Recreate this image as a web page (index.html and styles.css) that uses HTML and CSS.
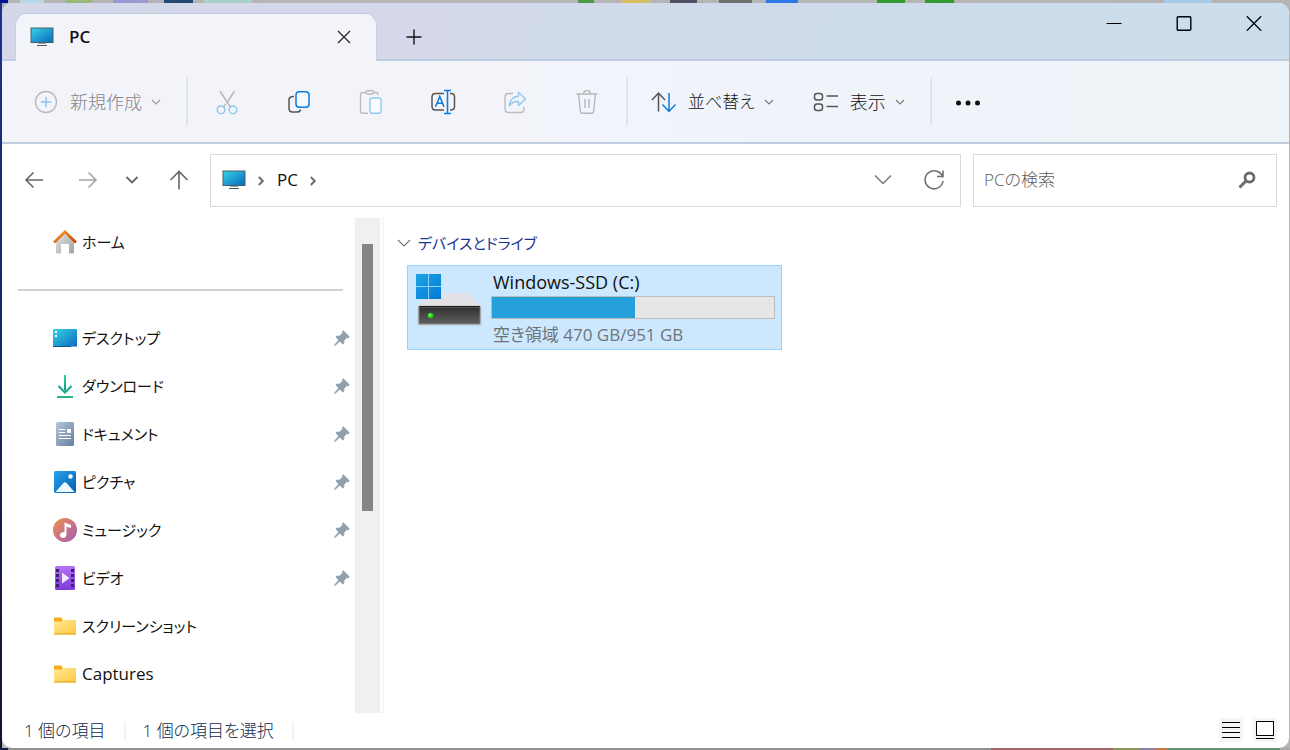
FILE: index.html
```html
<!DOCTYPE html>
<html lang="ja">
<head>
<meta charset="utf-8">
<title>PC</title>
<link rel="stylesheet" href="styles.css">
</head>
<body>
<svg class="defs" aria-hidden="true">
  <defs>
    <linearGradient id="g-screen" x1="0" y1="0" x2="1" y2="1"><stop offset="0" stop-color="#36d6e6"/><stop offset="1" stop-color="#0a66be"/></linearGradient>
    <linearGradient id="g-roof" x1="0" y1="0" x2="1" y2="1"><stop offset="0" stop-color="#f7a01a"/><stop offset="1" stop-color="#cc3a0c"/></linearGradient>
    <linearGradient id="g-wall" x1="0" y1="0" x2="1" y2="1"><stop offset="0" stop-color="#e6e6e6"/><stop offset="1" stop-color="#a2a2a4"/></linearGradient>
    <linearGradient id="g-down" x1="0" y1="0" x2="0" y2="1"><stop offset="0" stop-color="#37d295"/><stop offset="1" stop-color="#0f9a8a"/></linearGradient>
    <linearGradient id="g-doc" x1="0" y1="0" x2="1" y2="1"><stop offset="0" stop-color="#b4c6da"/><stop offset="1" stop-color="#667f9e"/></linearGradient>
    <linearGradient id="g-pic" x1="0" y1="0" x2="1" y2="1"><stop offset="0" stop-color="#22a4ea"/><stop offset="1" stop-color="#0a5cb4"/></linearGradient>
    <linearGradient id="g-music" x1="0" y1="0" x2="1" y2="1"><stop offset="0" stop-color="#f29150"/><stop offset="1" stop-color="#a45ab4"/></linearGradient>
    <linearGradient id="g-video" x1="0" y1="0" x2="0" y2="1"><stop offset="0" stop-color="#b472f6"/><stop offset="1" stop-color="#7e3ad8"/></linearGradient>
    <linearGradient id="g-folder" x1="0" y1="0" x2="1" y2="1"><stop offset="0" stop-color="#ffe89c"/><stop offset="1" stop-color="#ffc838"/></linearGradient>
    <linearGradient id="g-drive" x1="0" y1="0" x2="0" y2="1"><stop offset="0" stop-color="#303030"/><stop offset="1" stop-color="#606060"/></linearGradient>
    <linearGradient id="g-win" x1="0" y1="0" x2="1" y2="1"><stop offset="0" stop-color="#1fa5e8"/><stop offset="1" stop-color="#0078d4"/></linearGradient>
    <symbol id="i-pc" viewBox="0 0 24 20">
      <path d="M8 17h8v-1.500h-2V15h-4v.5H8z" fill="#9aa4aa"/><path d="M7 18.500h10" stroke="#4c5a62"/>
      <rect x="1" y="1" width="22" height="14.500" fill="url(#g-screen)" stroke="#46606c"/>
    </symbol>
    <symbol id="i-pin" viewBox="0 0 16 16">
      <path d="M9.500.5 15.500 6.500 14.800 8h-2L10.300 10.500V13L9 14.500 5.800 11.500 1.500 15.600.3 15.800.5 14.500 4.400 10.100 1.500 7l1-1.300H5.500L8.300 3V1z" fill="#93a0a9"/>
    </symbol>
    <symbol id="i-folder" viewBox="0 0 24 24">
      <path d="M1 4.500q0-1 1-1h6l1.500 1.500V8H1z" fill="#f7ab14"/><path d="M1 7.500h8l1.500-1.500H23v14.500H1z" fill="url(#g-folder)"/><path d="M1 20h22" stroke="#e3a519"/>
    </symbol>
    <symbol id="i-chev" viewBox="0 0 12 12"><path d="m2 4 4 4 4-4" fill="none" stroke="#777" stroke-width="1.100"/></symbol>
    <symbol id="i-crumb" viewBox="0 0 8 10"><path d="m1.800 1 4 4-4 4" fill="none" stroke="#6e6e6e" stroke-width="2"/></symbol>
  </defs>
</svg>

<div class="window">
  <header class="titlebar">
    <div class="tab">
      <svg class="pc-icon"><use href="#i-pc"/></svg>
      <span class="tab-title">PC</span>
      <button class="tab-close" aria-label="タブを閉じる"><svg width="14" height="14"><path d="m1 1 12 12M13 1 1 13" stroke="#222" stroke-width="1.200"/></svg></button>
    </div>
    <button class="new-tab" aria-label="新しいタブ"><svg width="16" height="16"><path d="M8 .5v15M.5 8h15" stroke="#111" stroke-width="1.400"/></svg></button>
    <div class="caption">
      <button aria-label="最小化"><svg width="16" height="16"><path d="M.5 8.500h15" stroke="#000"/></svg></button>
      <button aria-label="最大化"><svg width="16" height="16"><rect x="1.200" y="1.700" width="13.600" height="13.600" rx="1" fill="none" stroke="#000" stroke-width="1.400"/></svg></button>
      <button aria-label="閉じる"><svg width="16" height="16"><path d="m.8 1.300 14.400 14.400M15.200 1.300.8 15.700" stroke="#000" stroke-width="1.300"/></svg></button>
    </div>
  </header>

  <div class="commands" role="toolbar">
    <button class="cmd disabled">
      <svg width="24" height="24" fill="none"><circle cx="12" cy="12" r="10.500" stroke="#b9babf" stroke-width="1.400"/><path d="M12 7v10M7 12h10" stroke="#8cc4ec" stroke-width="1.500"/></svg>
      <span>新規作成</span><svg class="chev faded"><use href="#i-chev"/></svg>
    </button>
    <div class="sep gap-before"></div>
    <div class="icon-group">
      <button aria-label="切り取り"><svg width="24" height="26" fill="none" stroke-width="1.400"><path d="m5 2 10.600 16.500M19.500 2l-6.800 10.500M10.800 14.500 8.400 18.500" stroke="#b5b6bb"/><circle cx="6" cy="20.800" r="3.800" stroke="#8ec5ef"/><circle cx="18" cy="20.800" r="3.800" stroke="#8ec5ef"/></svg></button>
      <button aria-label="コピー"><svg width="24" height="24" fill="none" stroke-width="1.500"><path d="M7 6.500H5.500Q2 7 2 10v8.500Q2 22 5.500 22H10q3 0 3.500-2.500" stroke="#555"/><rect x="9" y="1.800" width="13" height="15.400" rx="3.200" stroke="#0b7ddb" fill="#f5faff"/></svg></button>
      <button aria-label="貼り付け"><svg width="24" height="26" fill="none" stroke-width="1.400"><path d="M9 24.300H3.500q-2 0-2-2V5.500q0-2 2-2H7M14.500 3.500H17q2 0 2 2V6" stroke="#babbc0"/><rect x="7" y="1.800" width="7.500" height="3.200" rx="1.500" stroke="#babbc0"/><rect x="11" y="9" width="11" height="15.300" rx="2" stroke="#91c7ee" fill="#f8fbff"/></svg></button>
      <button aria-label="名前の変更"><svg width="26" height="26" fill="none" stroke-width="1.500"><path d="M14 4.500H5.500Q2 4.500 2 8v9.500Q2 21 5.500 21H14M20 4.500h1q3.500 0 3.500 3.500v9.500q0 3.500-3.500 3.500h-1" stroke="#555"/><path d="M14 1.500h7M17.500 1.500v23M14 24.500h7M5.500 17.800 9.800 7.500l4.200 10.300M7 14.300h5.600" stroke="#0b7ddb" stroke-width="1.600"/></svg></button>
      <button aria-label="共有"><svg width="24" height="24" fill="none" stroke-width="1.400" stroke-linejoin="round"><path d="M10 3.500H5.500q-3.500 0-3.500 3.500v12q0 3.500 3.500 3.500h12q3.500 0 3.500-3.500v-2" stroke="#babbc0"/><path d="M15.500 2.200 22.500 9l-7 6.500v-4Q9.500 11 6.500 16q.5-9 9-10z" stroke="#94c8ee" fill="#edf5fc"/></svg></button>
      <button aria-label="削除"><svg width="24" height="26" fill="none" stroke="#b5b7bb" stroke-width="1.400"><path d="M1.500 5h21M8.500 5q0-3.400 3.500-3.400T15.500 5M3.500 5l1.800 17q.3 2.300 2.500 2.300h8.400q2.200 0 2.500-2.300l1.800-17M10 10v9M14 10v9"/></svg></button>
    </div>
    <div class="sep"></div>
    <button class="cmd sort">
      <svg width="25" height="24" fill="none" stroke-width="1.500"><path d="M7.500 21.500V3.500M1 10l6.500-7 6.500 7" stroke="#555"/><path d="M18 3v18M11.500 14.500 18 21.500l6.500-7" stroke="#0b7ddb"/></svg>
      <span>並べ替え</span><svg class="chev"><use href="#i-chev"/></svg>
    </button>
    <button class="cmd view">
      <svg width="25" height="24" fill="none" stroke="#555" stroke-width="1.500"><rect x="1.500" y="3.500" width="8" height="6.500" rx="2.500"/><rect x="1.500" y="14" width="8" height="6.500" rx="2.500"/><path d="M13.500 6H25M13.500 16.500H25"/></svg>
      <span>表示</span><svg class="chev"><use href="#i-chev"/></svg>
    </button>
    <div class="sep gap-before"></div>
    <button class="more" aria-label="もっと見る"><svg width="26" height="8" fill="#111"><circle cx="3.500" cy="5" r="2.500"/><circle cx="13" cy="5" r="2.500"/><circle cx="22.500" cy="5" r="2.500"/></svg></button>
  </div>

  <nav class="nav">
    <button class="nav-step" aria-label="戻る"><svg width="20" height="20" fill="none" stroke="#666" stroke-width="1.600"><path d="M19 10H2M9.500 2.500 2 10l7.500 7.500"/></svg></button>
    <button class="nav-step" aria-label="進む"><svg width="20" height="20" fill="none" stroke="#a4a4a4" stroke-width="1.600"><path d="M1 10h17M10.500 2.500 18 10l-7.500 7.500"/></svg></button>
    <button class="nav-recent" aria-label="最近表示した場所"><svg width="14" height="10" fill="none" stroke="#666" stroke-width="1.800"><path d="m1.500 2 5.500 5.500L12.500 2"/></svg></button>
    <button class="nav-up" aria-label="上へ"><svg width="20" height="22" fill="none" stroke="#666" stroke-width="1.600"><path d="M10 20.500V2.500M1.500 11 10 2.500l8.500 8.500"/></svg></button>
    <div class="address">
      <svg class="pc-icon"><use href="#i-pc"/></svg>
      <svg class="crumb"><use href="#i-crumb"/></svg>
      <a class="crumb-link" href="#">PC</a>
      <svg class="crumb"><use href="#i-crumb"/></svg>
      <button class="address-btn push" aria-label="以前の場所"><svg width="18" height="12" fill="none" stroke="#777" stroke-width="1.500"><path d="m1 1.500 8 8 8-8"/></svg></button>
      <button class="address-btn" aria-label="最新の情報に更新"><svg width="22" height="22" fill="none" stroke="#707070" stroke-width="1.600"><path d="M19.800 8.500A9 9 0 1 0 20 12M20 1.500v6h-6"/></svg></button>
    </div>
    <label class="search">
      <input type="text" placeholder="PCの検索" aria-label="PCの検索">
      <svg width="18" height="18" fill="none" stroke="#6c6c6c"><circle cx="11.500" cy="6.500" r="4.500" stroke-width="2.800"/><path d="M8 10 1.500 16.500" stroke-width="3"/></svg>
    </label>
  </nav>

  <main class="main">
    <aside class="sidebar">
      <a class="place" href="#"><svg width="24" height="24"><path d="M3 10 12 2l9 8v12q0 1.500-1.500 1.500H16V14H8v9.500H4.500Q3 23.500 3 22z" fill="url(#g-wall)"/><path d="M1 12.500 12 1.800l11 10.700" fill="none" stroke="url(#g-roof)" stroke-width="2.600"/></svg><span>ホーム</span></a>
      <hr class="rule">
      <a class="place" href="#"><svg width="24" height="24"><rect y="3" width="24" height="18" rx="1" fill="url(#g-screen)"/><path d="M0 20.500h24" stroke="#11578c"/><path d="M2 5h2v2H2zM2 9h2v2H2z" fill="#fff"/><path d="M18.500 20.500h5" stroke="#fff" stroke-dasharray="1 1"/></svg><span>デスクトップ</span><svg class="pin"><use href="#i-pin"/></svg></a>
      <a class="place" href="#"><svg width="24" height="24" fill="none" stroke-width="2"><path d="M11 1h2v15.500h-2z" fill="url(#g-down)" stroke="none"/><path d="m5.500 12 6.500 6.500 6.500-6.500" stroke="#16a68b"/><path d="M4 23h16" stroke="#27b58f"/></svg><span>ダウンロード</span><svg class="pin"><use href="#i-pin"/></svg></a>
      <a class="place" href="#"><svg width="24" height="24"><rect x="3" width="18" height="24" rx="1.500" fill="url(#g-doc)"/><path d="M6 7.500h6M6 10.500h6M6 13.500h12M6 16.500h12" stroke="#fff"/><path d="M14 7h4v4h-4z" fill="#fff"/></svg><span>ドキュメント</span><svg class="pin"><use href="#i-pin"/></svg></a>
      <a class="place" href="#"><svg width="24" height="24"><rect x="1" y="1" width="22" height="22" rx="1.500" fill="url(#g-pic)"/><path d="M2.500 22 10.500 13q1.500-1.500 3 0l8 9z" fill="#eef8ff"/><circle cx="17.500" cy="6.500" r="2.200" fill="#fff"/></svg><span>ピクチャ</span><svg class="pin"><use href="#i-pin"/></svg></a>
      <a class="place" href="#"><svg width="24" height="24"><circle cx="12" cy="12" r="12" fill="url(#g-music)"/><path d="M11.500 4.500 18 7v3l-4.500-1.200V16q0 4-3.500 4-3-.3-3-3t4.500-3z" fill="#fff"/></svg><span>ミュージック</span><svg class="pin"><use href="#i-pin"/></svg></a>
      <a class="place" href="#"><svg width="24" height="24"><rect x="2" width="20" height="24" rx="1.500" fill="url(#g-video)"/><path d="M4.500 3v19M19.500 3v19" stroke="#3d2070" stroke-width="3" stroke-dasharray="3 2"/><path d="M9 6.500 16.500 12 9 17.500z" fill="#f2eafa"/></svg><span>ビデオ</span><svg class="pin"><use href="#i-pin"/></svg></a>
      <a class="place" href="#"><svg width="24" height="24"><use href="#i-folder"/></svg><span>スクリーンショット</span></a>
      <a class="place latin" href="#"><svg width="24" height="24"><use href="#i-folder"/></svg><span>Captures</span></a>
    </aside>
    <div class="scrollbar"><div class="thumb"></div></div>
    <section class="content">
      <h2 class="group"><svg width="14" height="10" fill="none" stroke="#777" stroke-width="1.200"><path d="m1 2 6 6 6-6"/></svg>デバイスとドライブ</h2>
      <div class="drives">
        <article class="drive">
          <svg class="drive-icon" viewBox="0 0 66 54">
            <path d="M14 19h38l13 14H2z" fill="#e2e2e6"/>
            <rect x="2.500" y="32.500" width="62" height="18" rx="1.500" fill="url(#g-drive)" stroke="#a6a8aa" stroke-width="1.500"/>
            <path d="M3 32.500h61" stroke="#1c1c1c"/>
            <circle cx="14.500" cy="41.500" r="2.800" fill="#23d523"/><circle cx="14" cy="41" r="1" fill="#a8ffa0"/>
            <path d="M0 0h25v25H0z" fill="#8fd3fa"/>
            <path d="M0 0h12v12H0zM13 0h12v12H13zM0 13h12v12H0zM13 13h12v12H13z" fill="url(#g-win)"/>
          </svg>
          <div class="drive-info">
            <div class="drive-line name">Windows-SSD (C:)</div>
            <div class="usage" role="meter" aria-valuenow="481" aria-valuemin="0" aria-valuemax="951" aria-label="使用領域"><div class="used" style="width:50.600%"></div></div>
            <div class="drive-line free">空き領域 470 GB/951 GB</div>
          </div>
        </article>
      </div>
    </section>
  </main>

  <footer class="status">
    <span class="status-item">1 個の項目</span>
    <span class="status-item">1 個の項目を選択</span>
    <div class="modes">
      <button aria-label="詳細"><svg width="18" height="18"><path d="M0 1.500h18M0 6.500h18M0 11.500h18M0 16.500h18" stroke="#000"/></svg></button>
      <button aria-label="大きなサムネイル"><svg width="18" height="18"><rect x=".5" y=".5" width="17" height="14" fill="#fff" stroke="#000"/><path d="M0 17.500h18" stroke="#000"/></svg></button>
    </div>
  </footer>
</div>
</body>
</html>
```
FILE: styles.css
```css
* { box-sizing: border-box; }

body {
  margin: 0;
  min-height: 100vh;
  display: flex;
  padding: 3px 1px 2px 2px;
  font: 17px/24px "Open Sans", "Noto Sans CJK JP", sans-serif;
  font-feature-settings: "palt";
  color: #111;
  background:
    linear-gradient(90deg, #141a4c 0 8px, transparent 8px) left bottom / 100% 2px no-repeat,
    linear-gradient(90deg, #00109a 0 8px, transparent 8px 20px, #b8d8e8 20px 44px, transparent 44px 65px, #9ab878 65px 92px, transparent 92px 113px, #9a9ad0 113px 148px, transparent 148px 164px, #234a70 164px 193px, transparent 193px 204px, #a8d0c8 204px 252px, transparent 252px 578px, #4a9a4a 578px 594px, transparent 594px 622px, #d8c060 622px 650px, transparent 650px 670px, #505060 670px 697px, transparent 697px 719px, #707070 719px 752px, transparent 752px 766px, #2a7ae8 766px 798px, transparent 798px 877px, #329a32 877px 905px, transparent 905px 925px, #329a32 925px 954px, transparent 954px 1164px, #a8cce8 1164px 1212px, transparent 1212px) left top / 100% 3px no-repeat,
    linear-gradient(90deg, #929292 0 991px, #a06868 991px 1113px, #8a965c 1113px 1140px, #8c80a4 1140px 1155px, #c07848 1155px 1168px, #649072 1168px 1280px, #aaa 1280px) left bottom / 100% 2px no-repeat,
    linear-gradient(#20308c, #10142e) left top / 2px 100% no-repeat,
    #b4b5b4;
}

button {
  display: flex;
  align-items: center;
  justify-content: center;
  padding: 0;
  border: 0;
  background: none;
  font: inherit;
  font-feature-settings: inherit;
  color: inherit;
}

a { color: inherit; text-decoration: none; }
svg { flex: none; }
.defs { position: absolute; width: 0; height: 0; }
.pc-icon { width: 24px; height: 20px; }

.window {
  flex: 1;
  min-width: 0;
  display: flex;
  flex-direction: column;
  overflow: hidden;
  border-radius: 10px;
  background: #fff;
}

.titlebar {
  height: 58px;
  display: flex;
  align-items: flex-end;
  padding-left: 13px;
  background: linear-gradient(#c0cbe0, #bfcfe0) bottom / 100% 2px no-repeat,
    linear-gradient(100deg, #d2d8e9 0%, #d5d8ea 33%, #d1daea 42%, #cddceb 75%, #ccdeeb 100%);
}

.tab {
  width: 362px;
  height: 48px;
  display: flex;
  align-items: center;
  padding: 0 11px 2px 14px;
  border: 1px solid #c6cde1;
  border-bottom: 0;
  border-radius: 12px 12px 0 0;
  background: #f3f4fa;
}
.tab-title { flex: 1; margin-left: 15px; font-weight: 600; }
.tab-close { width: 42px; height: 32px; }
.new-tab { width: 48px; height: 48px; margin-left: 13px; }
.caption { display: flex; align-self: flex-start; margin-left: auto; }
.caption button { width: 70px; height: 40px; }

.commands {
  height: 83px;
  display: flex;
  align-items: center;
  padding-left: 32px;
  border-bottom: 2px solid #c0cce0;
  background: linear-gradient(90deg, #f3f4fa 0 30%, #f0f4fa 60%, #eff4f9);
  font-size: 18px;
  font-weight: 300;
}
.cmd span { margin: 0 8px 0 12px; }
.disabled { color: #85878c; }
.chev { width: 12px; height: 12px; }
.faded { opacity: .7; }
.sep { width: 2px; height: 48px; background: #e1e4ea; }
.gap-before { margin-left: 24px; }
.icon-group { display: flex; margin: 0 3px; }
.icon-group button { width: 72px; height: 48px; }
.sort { margin-left: 23px; font-size: 17px; }
.view { margin-left: 38px; }
.more { width: 72px; height: 48px; }

.nav {
  height: 74px;
  display: flex;
  align-items: center;
  padding: 0 12px 2px 5px;
}
.nav button { height: 48px; }
.nav-step { width: 54px; }
.nav-recent { width: 34px; }
.nav-up { width: 60px; }
.address {
  flex: 1;
  height: 53px;
  display: flex;
  align-items: center;
  margin: 0 12px 0 1px;
  padding: 0 1px 0 11px;
  border: 1px solid #d9d9d9;
}
.crumb { width: 8px; height: 10px; margin: 2px 0 0 11px; }
.crumb-link { margin-left: 12px; }
.push { margin-left: auto; }
.address-btn { width: 51px; }
.search {
  width: 304px;
  height: 53px;
  display: flex;
  align-items: center;
  padding: 0 20px 0 10px;
  border: 1px solid #d9d9d9;
}
.search input {
  flex: 1;
  min-width: 0;
  padding: 0;
  border: 0;
  outline: 0;
  background: none;
  font: inherit;
  font-weight: 300;
  font-feature-settings: inherit;
}
.search input::placeholder { color: #5c5c5c; opacity: 1; }

.main { flex: 1; display: flex; }
.sidebar { width: 353px; padding-bottom: 15px; }
.place {
  height: 48px;
  display: flex;
  align-items: center;
  gap: 5px;
  padding: 0 5px 0 51px;
  font-size: 15px;
}
.latin { font-size: 17px; }
.pin { width: 16px; height: 16px; margin-left: auto; }
.rule { height: 2px; margin: 23px 12px 23px 16px; border: 0; background: #d2d2d2; }
.scrollbar {
  width: 29px;
  padding: 26px 11px 0 7px;
  background: linear-gradient(90deg, #f0f0f0 25px, #fff 25px 27px, #f7f7f7 27px);
}
.thumb { height: 267px; background: #858585; }

.content { flex: 1; padding: 13px 12px 0 13px; }
.group {
  display: flex;
  align-items: center;
  gap: 7px;
  margin: 0 0 10px;
  font-size: 15px;
  font-weight: 400;
  color: #1c3390;
}
.drives { display: grid; grid-template-columns: repeat(auto-fill, 375px); padding-left: 10px; }
.drive {
  display: flex;
  gap: 9px;
  padding: 4px 6px 2px 8px;
  border: 1px solid #99d1ff;
  background: #cce8ff;
}
.drive-icon { width: 66px; height: 54px; margin-top: 4px; }
.drive-info { flex: 1; }
.drive-line { padding-left: 2px; }
.name { font-size: 18px; }
.usage { height: 23px; margin: 2px 0 4px; border: 1px solid #bcbcbc; background: #e6e6e6; }
.used { height: 100%; background: #26a0da; }
.free { color: #707478; }

.status {
  height: 35px;
  display: flex;
  align-items: center;
  padding: 1px 12px 0 22px;
  font-size: 17px;
  font-weight: 300;
  color: #10294a;
}
.status-item { margin-right: 17px; padding-right: 18px; border-right: 2px solid #f3f3f3; line-height: 18px; }
.modes { display: flex; gap: 10px; margin: 0 0 3px auto; }
.modes button { width: 24px; height: 24px; border-radius: 3px; background: #f5f5f5; }
```
